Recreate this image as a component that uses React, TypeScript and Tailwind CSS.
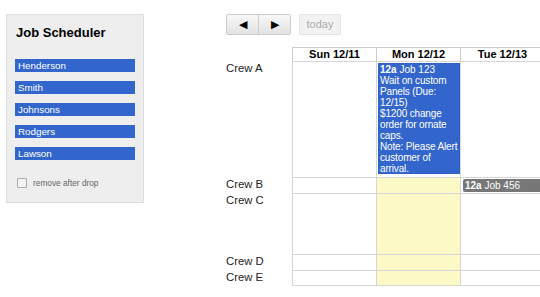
const crews = [
  { name: "Henderson" },
  { name: "Smith" },
  { name: "Johnsons" },
  { name: "Rodgers" },
  { name: "Lawson" },
];

const days = ["Sun 12/11", "Mon 12/12", "Tue 12/13"];

const rows = [
  { label: "Crew A", height: "h-[116px]" },
  { label: "Crew B", height: "h-[16px]" },
  { label: "Crew C", height: "h-[61px]" },
  { label: "Crew D", height: "h-[16px]" },
  { label: "Crew E", height: "h-[16px]" },
];

const jobLines = [
  "Wait on custom",
  "Panels (Due:",
  "12/15)",
  "$1200 change",
  "order for ornate",
  "caps.",
  "Note: Please Alert",
  "customer of",
  "arrival.",
];

function Sidebar() {
  return (
    <div className="ml-[6px] h-[189px] w-[138px] shrink-0 border border-[#dddddd] bg-[#eeeeee] pl-[8px]">
      <div className="ml-[1px] mt-[10px] text-[13px] font-bold leading-[16px] text-black">Job Scheduler</div>
      <div className="mt-[18px] flex flex-col gap-[9px]">
        {crews.map((c) => (
          <div
            key={c.name}
            className="flex h-[13px] w-[120px] items-center bg-[#3366cc] pl-[3px] text-[9.8px] leading-[13px] text-white"
          >
            {c.name}
          </div>
        ))}
      </div>
      <div className="ml-[2px] mt-[17px] flex items-center gap-[6px]">
        <div className="h-[10px] w-[10px] rounded-[1px] border border-[#aaaaaa] bg-[#f4f4f4]" />
        <span className="text-[8.3px] text-[#666666]">remove after drop</span>
      </div>
    </div>
  );
}

function Toolbar() {
  return (
    <div className="flex h-[21px] items-stretch gap-[8px]">
      <div className="flex overflow-hidden rounded-[2px] border border-[#cccccc]">
        <button className="flex w-[32px] items-center justify-center border-r border-[#cccccc] bg-gradient-to-b from-[#f8f8f8] to-[#e2e2e2] text-[11px] text-black">
          ◀
        </button>
        <button className="flex w-[31px] items-center justify-center bg-gradient-to-b from-[#f8f8f8] to-[#e2e2e2] text-[11px] text-black">
          ▶
        </button>
      </div>
      <button className="flex w-[42px] items-center justify-center rounded-[2px] border border-[#e4e4e4] bg-[#f2f2f2] text-[11px] text-[#aaaaaa]">
        today
      </button>
    </div>
  );
}

function Calendar() {
  return (
    <div className="mt-[12px] flex flex-col">
      <div className="flex">
        <div className="w-[66px] shrink-0" />
        {days.map((d) => (
          <div
            key={d}
            className="h-[14px] w-[84px] shrink-0 border-l border-t border-[#cccccc] bg-white text-center text-[11px] font-bold leading-[13px] text-black"
          >
            {d}
          </div>
        ))}
      </div>
      {rows.map((r, ri) => (
        <div key={r.label} className={`flex ${r.height}`}>
          <div className="w-[66px] shrink-0 pt-[1px] text-[11.3px] leading-[13px] text-[#222222]">{r.label}</div>
          {days.map((d, di) => (
            <div
              key={d}
              className={`w-[84px] shrink-0 border-l border-t border-[#d6d6d6] ${
                ri === rows.length - 1 ? "border-b" : ""
              } ${di === 1 && ri > 0 ? "bg-[#fcf9c6]" : "bg-white"}`}
            >
              {ri === 0 && di === 1 && (
                <div className="ml-px mt-px h-[111px] w-[82px] border border-[#3060c0] bg-[#3366cc] pl-[1px] text-[10px] leading-[11px] text-white">
                  <div className="whitespace-nowrap">
                    <b>12a</b> Job 123
                  </div>
                  {jobLines.map((l) => (
                    <div key={l} className="whitespace-nowrap tracking-[-0.15px]">
                      {l}
                    </div>
                  ))}
                </div>
              )}
              {ri === 1 && di === 2 && (
                <div className="ml-[2px] mt-px h-[13px] w-[82px] rounded-l-[2px] bg-[#777777] pl-[2px] text-[10px] leading-[13px] text-white">
                  <b>12a</b> Job 456
                </div>
              )}
            </div>
          ))}
        </div>
      ))}
    </div>
  );
}

export default function App() {
  return (
    <div className="flex h-[297px] w-[540px] overflow-hidden bg-white pt-[14px] font-['Liberation_Sans',Arial,sans-serif]">
      <Sidebar />
      <div className="ml-[82px] flex shrink-0 flex-col">
        <Toolbar />
        <Calendar />
      </div>
    </div>
  );
}
